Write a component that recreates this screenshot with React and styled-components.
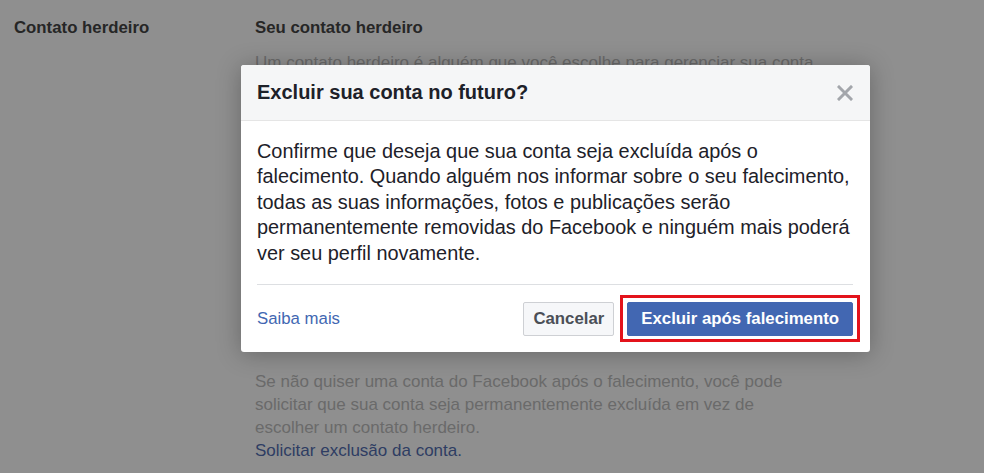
import React from 'react'
import styled, { createGlobalStyle } from 'styled-components'

const GlobalStyle = createGlobalStyle`
  html, body {
    margin: 0;
    padding: 0;
    background: #8f8f8f;
    font-family: "Liberation Sans", Arial, sans-serif;
  }
`

const Page = styled.div`
  position: relative;
  width: 984px;
  height: 473px;
  overflow: hidden;
  box-sizing: border-box;
  padding: 18px 14px 0;
  display: grid;
  grid-template-columns: 241px 563px;
  align-items: start;
`

const Label = styled.div`
  font-size: 16.8px;
  line-height: 20px;
  font-weight: bold;
  color: #262626;
`

const Section = styled.div`
  display: flex;
  flex-direction: column;
`

const SectionTitle = styled.div`
  font-size: 16.8px;
  line-height: 20px;
  font-weight: bold;
  color: #262626;
`

const Covered = styled.div`
  height: 319px;
  margin-top: 12.5px;
  overflow: hidden;
`

const Text = styled.p`
  margin: 0;
  font-size: 17px;
  line-height: 23px;
  color: #6a6a6a;
`

const Link = styled.a`
  display: block;
  color: ${p => p.$light ? '#4267b2' : '#2e3d63'};
  text-decoration: none;
  cursor: pointer;
`

const Overlay = styled.div`
  position: absolute;
  inset: 0;
  padding: 65px 0 0 241px;
`

const Dialog = styled.div`
  width: 629px;
  background: #fff;
  border-radius: 3px;
  box-shadow: 0 2px 24px rgba(0, 0, 0, 0.28);
  overflow: hidden;
`

const Header = styled.div`
  height: 55px;
  display: flex;
  align-items: center;
  justify-content: space-between;
  padding: 0 17px 0 16px;
  background: #f5f6f7;
  border-bottom: 1px solid #e5e5e5;
`

const Title = styled.h3`
  margin: 0;
  font-size: 20px;
  font-weight: bold;
  color: #1d2129;
`

const Close = styled.button`
  display: flex;
  padding: 0;
  border: none;
  background: none;
  cursor: pointer;
`

const Body = styled.div`
  padding: 0 17px 0 16px;
`

const Message = styled.p`
  margin: 0;
  padding: 18px 0;
  font-size: 19.9px;
  line-height: 25.4px;
  color: #1d2129;
  border-bottom: 1px solid #dddfe2;
`

const Footer = styled.div`
  display: flex;
  align-items: center;
  justify-content: space-between;
  padding: 17px 17px 16px 16px;
  font-size: 16.8px;
`

const Actions = styled.div`
  display: flex;
  gap: 13px;
`

const Button = styled.button`
  position: relative;
  height: 34px;
  padding: 0 ${p => p.$primary ? '13px' : '9px'};
  border: 1px solid ${p => p.$primary ? '#4267b2' : '#ced0d4'};
  border-radius: 2px;
  background: ${p => p.$primary ? '#4267b2' : '#f6f7f9'};
  color: ${p => p.$primary ? '#fff' : '#4b4f56'};
  font-family: inherit;
  font-size: 16.8px;
  font-weight: bold;
  cursor: pointer;

  ${p => p.$highlight && `
    &::after {
      content: '';
      position: absolute;
      inset: -8px -8px -7px -8px;
      border: 3px solid #e3131b;
      pointer-events: none;
    }
  `}
`

const CloseIcon = () => (
  <svg width='16' height='16' viewBox='0 0 16 16'>
    <path d='M2 2L14 14M14 2L2 14' stroke='#a3a6ab' strokeWidth='3' strokeLinecap='square' />
  </svg>
)

export default function App () {
  return (
    <>
      <GlobalStyle />
      <Page>
        <Label>Contato herdeiro</Label>
        <Section>
          <SectionTitle>Seu contato herdeiro</SectionTitle>
          <Covered>
            <Text>
              Um contato herdeiro é alguém que você escolhe para gerenciar sua conta
              após o falecimento. Essa pessoa poderá fazer coisas como fixar uma
              publicação no seu perfil, responder a novas solicitações de amizade e
              atualizar sua foto do perfil. Essa pessoa não poderá fazer publicações
              em seu nome nem ver suas mensagens.
            </Text>
          </Covered>
          <Text>
            Se não quiser uma conta do Facebook após o falecimento, você pode
            solicitar que sua conta seja permanentemente excluída em vez de
            escolher um contato herdeiro.
            <Link>Solicitar exclusão da conta.</Link>
          </Text>
        </Section>

        <Overlay>
          <Dialog>
            <Header>
              <Title>Excluir sua conta no futuro?</Title>
              <Close aria-label='Fechar'><CloseIcon /></Close>
            </Header>
            <Body>
              <Message>
                Confirme que deseja que sua conta seja excluída após o falecimento.
                Quando alguém nos informar sobre o seu falecimento, todas as suas
                informações, fotos e publicações serão permanentemente removidas do
                Facebook e ninguém mais poderá ver seu perfil novamente.
              </Message>
            </Body>
            <Footer>
              <Link $light>Saiba mais</Link>
              <Actions>
                <Button>Cancelar</Button>
                <Button $primary $highlight>Excluir após falecimento</Button>
              </Actions>
            </Footer>
          </Dialog>
        </Overlay>
      </Page>
    </>
  )
}
